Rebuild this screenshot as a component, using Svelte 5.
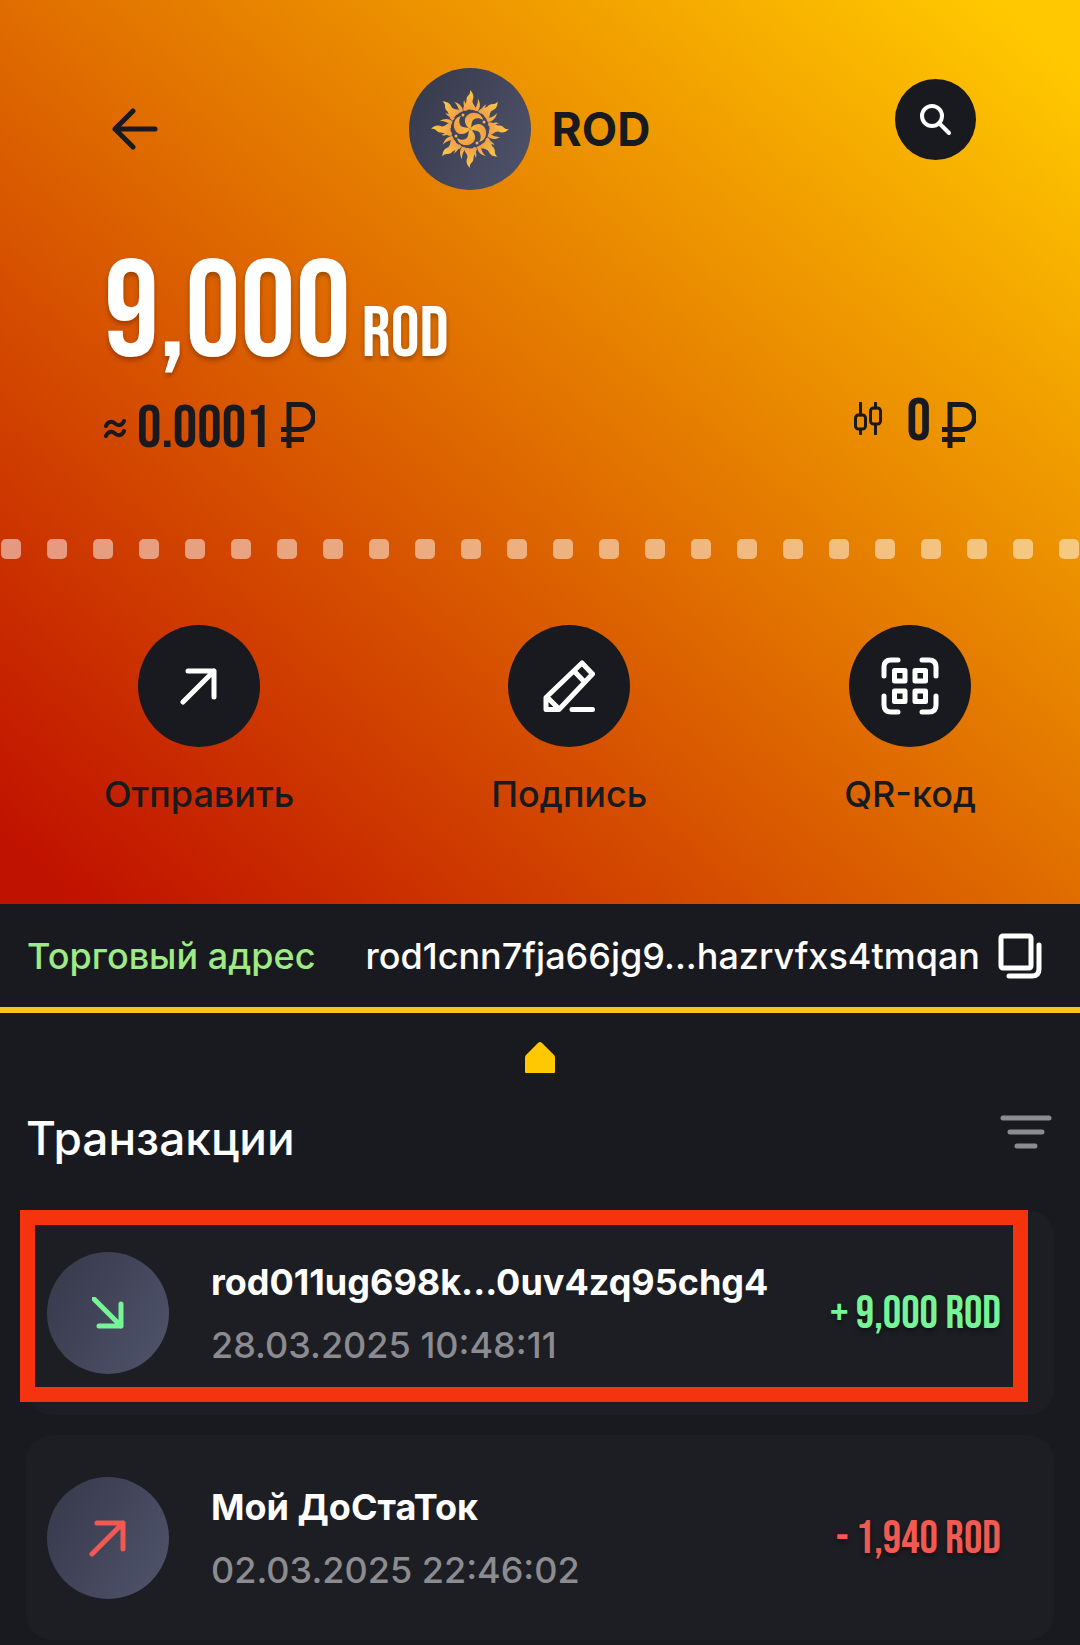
<script>
  const actions = [
    { id: 'send', label: 'Отправить' },
    { id: 'sign', label: 'Подпись' },
    { id: 'qr', label: 'QR-код' },
  ];

  const transactions = [
    { id: 1, name: 'rod011ug698k...0uv4zq95chg4', date: '28.03.2025 10:48:11', sign: '+', sum: '9,000 ROD', incoming: true, marked: true },
    { id: 2, name: 'Мой ДоСтаТок', date: '02.03.2025 22:46:02', sign: '-', sum: '1,940 ROD', incoming: false, marked: false },
  ];

  const dots = Array.from({ length: 24 }, (_, i) => i);
  const longRays = Array.from({ length: 8 }, (_, i) => i * 45);
  const shortRays = Array.from({ length: 8 }, (_, i) => i * 45 + 22);
  const blades = Array.from({ length: 4 }, (_, i) => i * 90);
</script>

{#snippet ruble()}
  <svg class="ruble" viewBox="0 0 34 46" role="img" aria-label="₽">
    <path d="M8 46V2.500H20a11.500 11.500 0 0 1 0 25H0M0 37.500H23" />
  </svg>
{/snippet}

<main class="wallet">
  <section class="hero">
    <header class="top">
      <button class="bare back" aria-label="Назад">
        <svg viewBox="0 0 46 42" width="46" height="42">
          <path d="M21 3L3 21L21 39M3 21H43" />
        </svg>
      </button>
      <div class="coin">
        <span class="avatar">
          <svg viewBox="-40 -40 80 80" width="80" height="80" aria-hidden="true">
            <defs>
              <linearGradient id="fire" gradientUnits="userSpaceOnUse" x1="-10" y1="-38" x2="10" y2="38">
                <stop offset="0" stop-color="#f9d048" />
                <stop offset="0.300" stop-color="#f29a4a" />
                <stop offset="0.450" stop-color="#f5b840" />
                <stop offset="0.650" stop-color="#f2944c" />
                <stop offset="0.750" stop-color="#f9c63c" />
                <stop offset="1" stop-color="#ee8a4c" />
              </linearGradient>
            </defs>
            <g fill="url(#fire)">
              {#each longRays as angle}
                <path transform="rotate({angle})" d="M-6.500 -18C-8 -23 -3 -25 -3.500 -30C-3 -34 1 -34 0 -39C4 -35 4 -32 2.500 -28C2 -24 7 -23 6 -18Q0 -21 -6.500 -18Z" />
              {/each}
              {#each shortRays as angle}
                <g transform="rotate({angle})">
                  <path d="M-1.500 -19C-4 -22 -1 -25 -4 -31C0 -28 2 -24 0.500 -19Z" />
                  <path d="M2 -19C5 -22 2 -25 6 -29C5 -26 7 -23 4 -18Z" />
                  <path d="M-4 -19C-6 -21 -5 -23 -8 -26C-7 -23 -8 -21 -6 -18Z" />
                </g>
              {/each}
              {#each blades as angle}
                <g transform="rotate({angle})">
                  <path d="M0 0C-5 -3 -8 -11 -1 -15C5 -18 12 -15 13 -9C9 -12 3 -11 2 -7C1 -4 2 -2 0 0Z" />
                  <circle cx="14" cy="-7" r="1.500" />
                </g>
              {/each}
            </g>
          </svg>
        </span>
        <h1>ROD</h1>
      </div>
      <button class="bare search" aria-label="Поиск">
        <svg viewBox="0 0 32 32" width="32" height="32">
          <circle cx="12" cy="12" r="10" />
          <path d="M19 19L29 29" />
        </svg>
      </button>
    </header>

    <div class="balance">
      <span class="sum">9,000</span>
      <span class="unit">ROD</span>
    </div>

    <div class="rates">
      <div class="rate">
        <svg class="approx" viewBox="0 0 22 20" width="22" height="20" role="img" aria-label="≈">
          <path d="M2 7C4 2 8 2 11 4.500S18 7 20 2M2 17C4 12 8 12 11 14.500S18 17 20 12" />
        </svg>
        <span class="value">0.0001</span>
        {@render ruble()}
      </div>
      <div class="rate price">
        <svg class="candles" viewBox="0 0 28 33" width="28" height="33" aria-hidden="true">
          <path d="M6.500 1V13M6.500 28V32M21.500 1V6M21.500 23V32" />
          <rect x="1.500" y="13" width="10" height="14" rx="3" />
          <rect x="16.500" y="6" width="10" height="16" rx="3" />
        </svg>
        <span class="value">0</span>
        {@render ruble()}
      </div>
    </div>

    <div class="perforation" aria-hidden="true">
      {#each dots as dot (dot)}<i></i>{/each}
    </div>

    <nav class="actions">
      {#each actions as action (action.id)}
        <button class="bare action">
          <span class="disc">
            {#if action.id === 'send'}
              <svg viewBox="0 0 38 38" width="38" height="38"><path d="M3 35L34 4M8 4H34V30" /></svg>
            {:else if action.id === 'sign'}
              <svg viewBox="0 0 52 54" width="52" height="54">
                <path d="M3 50.500V38.500L39 4L49.500 15L16 50.500ZM31 12L41.500 23M5 39L15 49M29 50.500H49.500" />
              </svg>
            {:else}
              <svg viewBox="0 0 58 58" width="58" height="58">
                <path d="M3 19V10Q3 3 10 3H17M41 3H48Q55 3 55 10V19M55 39V48Q55 55 48 55H41M17 55H10Q3 55 3 48V39" />
                <path d="M13.500 13.500H24V24H13.500ZM34 13.500H44.500V24H34ZM13.500 34H24V44.500H13.500ZM34 34H44.500V44.500H34Z" />
              </svg>
            {/if}
          </span>
          <span class="caption">{action.label}</span>
        </button>
      {/each}
    </nav>
  </section>

  <section class="address">
    <span class="label">Торговый адрес</span>
    <span class="hash">rod1cnn7fja66jg9...hazrvfxs4tmqan</span>
    <button class="bare copy" aria-label="Скопировать адрес">
      <svg viewBox="0 0 44 46" width="44" height="46">
        <rect x="3" y="3" width="30" height="32" rx="2" />
        <path d="M41 12V36Q41 43 34 43H11" />
      </svg>
    </button>
  </section>

  <div class="home">
    <svg viewBox="0 0 32 32" width="32" height="32" aria-hidden="true">
      <path d="M16 0Q17 0 18 1L30 13Q31 14 31 16V30Q31 31 30 31H2Q1 31 1 30V16Q1 14 2 13L14 1Q15 0 16 0Z" />
    </svg>
  </div>

  <section class="history">
    <header class="heading">
      <h2>Транзакции</h2>
      <button class="bare filter" aria-label="Фильтр">
        <svg viewBox="0 0 52 34" width="52" height="34"><path d="M3 3H49M10 17H42M17 31H35" /></svg>
      </button>
    </header>

    <ul>
      {#each transactions as tx (tx.id)}
        <li class="card" class:incoming={tx.incoming} class:marked={tx.marked}>
          <span class="direction">
            {#if tx.incoming}
              <svg viewBox="0 0 32 32" width="32" height="32"><path d="M2 2L29 29M29 7V29H7" /></svg>
            {:else}
              <svg viewBox="0 0 38 38" width="38" height="38"><path d="M3 35L34 4M8 4H34V30" /></svg>
            {/if}
          </span>
          <span class="details">
            <strong>{tx.name}</strong>
            <time>{tx.date}</time>
          </span>
          <span class="amount">{tx.sign} {tx.sum}</span>
        </li>
      {/each}
    </ul>
  </section>
</main>

<style>
  :global(body) {
    margin: 0;
    background: #191a1f;
  }

  .wallet {
    --ink: #191a1f;
    --narrow: 'Bebas Neue', 'Liberation Sans Narrow', 'Roboto Condensed', sans-serif;
    color: #fff;
    font-family: Inter, 'Liberation Sans', sans-serif;
    font-size: 36px;
    font-weight: 500;
    line-height: 44px;
    overflow: hidden;
  }

  .wallet * {
    box-sizing: border-box;
  }

  svg {
    display: block;
    flex: none;
    fill: none;
    stroke: currentColor;
    stroke-width: 5px;
    stroke-linecap: round;
    stroke-linejoin: round;
  }

  .bare {
    padding: 0;
    border: 0;
    background: none;
    color: inherit;
    font: inherit;
    cursor: pointer;
  }

  h1,
  h2 {
    margin: 0;
    font-size: 46px;
    line-height: 56px;
  }

  h2 {
    font-weight: 500;
  }

  .hero {
    padding-top: 68px;
    padding-bottom: 88px;
    background: linear-gradient(to top right, #c01200 4%, #ffc800 96%);
    color: var(--ink);
  }

  .top {
    display: flex;
    align-items: center;
    justify-content: space-between;
    padding: 0 104px;
  }

  .bare.back {
    padding: 0 6px 0 8px;
  }

  .coin {
    display: flex;
    align-items: center;
    gap: 21px;
  }

  .avatar,
  .direction {
    display: grid;
    flex: none;
    place-items: center;
    width: 122px;
    height: 122px;
    border-radius: 50%;
    background: linear-gradient(120deg, #36384a, #50546c);
  }

  .avatar svg {
    stroke: none;
  }

  .search {
    display: grid;
    place-items: center;
    align-self: start;
    width: 81px;
    height: 81px;
    margin-top: 11px;
    border-radius: 50%;
    background: var(--ink);
    color: #fff;
  }

  .search svg {
    stroke-width: 4px;
  }

  .balance {
    display: flex;
    align-items: baseline;
    gap: 11px;
    margin-top: 55px;
    padding: 0 104px;
    color: #fff;
    font-family: var(--narrow);
    line-height: 140px;
    text-shadow: 0 3px 5px rgb(0 0 0 / 30%);
  }

  .sum {
    font-size: 138px;
  }

  .unit {
    font-size: 72px;
    line-height: 72px;
  }

  .rates {
    display: flex;
    align-items: flex-start;
    justify-content: space-between;
    padding: 11px 104px 0;
  }

  .rate {
    display: flex;
    align-items: center;
    gap: 11px;
    height: 66px;
  }

  .price {
    height: 52px;
  }

  .value {
    font-family: var(--narrow);
    font-size: 61px;
    line-height: 60px;
  }

  .approx {
    stroke-width: 4px;
  }

  .candles {
    align-self: flex-start;
    margin-top: 6px;
    margin-right: 14px;
    stroke-width: 3px;
  }

  .ruble {
    align-self: flex-start;
    width: 34px;
    height: 46px;
    margin-top: 6px;
    stroke-linecap: butt;
    stroke-linejoin: miter;
  }

  .perforation {
    display: flex;
    justify-content: space-between;
    margin-top: 77px;
    padding: 0 1px;
  }

  .perforation i {
    width: 20px;
    height: 20px;
    border-radius: 5px;
    background: rgb(255 255 255 / 50%);
  }

  .actions {
    display: flex;
    justify-content: space-between;
    margin-top: 66px;
    padding: 0 104px;
  }

  .action {
    display: grid;
    justify-items: center;
    gap: 25px;
  }

  .disc {
    display: grid;
    place-items: center;
    width: 122px;
    height: 122px;
    border-radius: 50%;
    background: var(--ink);
    color: #fff;
  }

  .address {
    display: flex;
    align-items: center;
    height: 109px;
    padding: 0 38px 0 27px;
    border-bottom: 6px solid #f9c31f;
  }

  .label {
    flex: 1;
    color: #9eea84;
  }

  .copy {
    margin-left: 18px;
  }

  .home {
    display: grid;
    justify-items: center;
    padding-top: 29px;
  }

  .home svg {
    fill: #ffc800;
    stroke: none;
  }

  .history {
    padding: 36px 26px 5px;
  }

  .heading {
    display: flex;
    justify-content: space-between;
    padding-right: 2px;
  }

  .filter {
    align-self: start;
    margin-top: 5px;
    color: #8b8b90;
  }

  ul {
    display: grid;
    gap: 20px;
    margin: 44px 0 0;
    padding: 0;
    list-style: none;
  }

  .card {
    position: relative;
    display: flex;
    align-items: center;
    height: 205px;
    padding: 0 53px 0 21px;
    border-radius: 26px;
    background: #1d1e23;
    color: #f05a50;
  }

  .card.incoming {
    color: #76f596;
  }

  /* Highlight frame laid over the selected transaction */
  .marked::after {
    content: '';
    position: absolute;
    inset: 0 26px 13px -6px;
    border: 15px solid #f5330f;
  }

  .details {
    display: grid;
    flex: 1;
    gap: 19px;
    padding-top: 2px;
    padding-left: 42px;
  }

  strong {
    color: #fff;
    font-weight: 700;
  }

  time {
    color: #8b8b90;
  }

  .amount {
    padding-top: 4px;
    font-family: var(--narrow);
    font-size: 46px;
    text-shadow: 0 3px 5px rgb(0 0 0 / 40%);
    white-space: nowrap;
  }
</style>
